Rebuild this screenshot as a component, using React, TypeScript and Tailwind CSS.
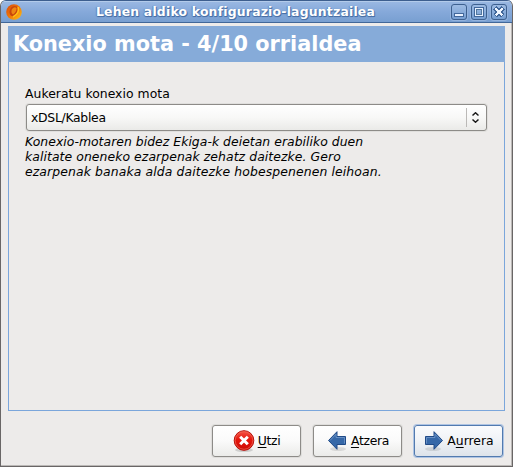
import type { ReactNode } from "react";

function WindowButton({ children }: { children: ReactNode }) {
  return (
    <div className="h-4 w-4 rounded-[3px] border border-[#3d608f] bg-linear-to-b from-[#9dbbe3] to-[#779fd2] shadow-[0_0_0_1px_#94b3dd]">
      <svg className="block h-[14px] w-[14px]" viewBox="0 0 14 14" shapeRendering="crispEdges">
        {children}
      </svg>
    </div>
  );
}

function TitleBar() {
  return (
    <header className="flex h-[22px] shrink-0 items-center border-b border-[#416799] bg-linear-to-b from-[#9bb9e3] via-[#86a9da] to-[#789fd1] shadow-[inset_0_1px_0_#b3cbea] pr-[5px] pl-[5px]">
      <svg className="h-4 w-4 shrink-0" viewBox="0 0 16 16">
        <defs>
          <linearGradient id="ball" x1="0" y1="0" x2="1" y2="1">
            <stop offset="0" stopColor="#d9480a" />
            <stop offset=".5" stopColor="#f07808" />
            <stop offset="1" stopColor="#ffc818" />
          </linearGradient>
        </defs>
        <circle cx="8" cy="8" r="7.8" fill="url(#ball)" />
        <path d="M5 3.500Q10 .5 12 4Q12 9 7.500 12.500Q3 12 3.500 7Z" fill="#c8460c" />
        <path d="M6 5Q9 2 10.500 4.500Q10.500 8 7 10.500Q4.500 9 6 5" fill="#ed8614" />
        <path d="M12 3Q14 9 7 13" fill="none" stroke="#ffbd17" strokeWidth="1.500" />
      </svg>
      <h1 className="flex-1 pr-[2px] text-center text-[12.4px] leading-[20px] font-bold tracking-[0.21px] whitespace-nowrap text-white [text-shadow:1px_1px_0_#4b70a5,0_1px_1px_#4b70a5,-1px_0_1px_#668cc0]">
        Lehen aldiko konfigurazio-laguntzailea
      </h1>
      <div className="flex gap-1">
        <WindowButton>
          <rect x="2.500" y="8.500" width="9" height="3" fill="#e8f1ff" stroke="#42689b" />
        </WindowButton>
        <WindowButton>
          <path fillRule="evenodd" d="M2 2H12V12H2ZM3 3V11H11V3Z" fill="#42689b" />
          <path fillRule="evenodd" d="M3 3H11V11H3ZM5 5V9H9V5Z" fill="#e8f1ff" />
          <path fillRule="evenodd" d="M4 4H10V10H4ZM5 5V9H9V5Z" fill="#52789f" />
        </WindowButton>
        <WindowButton>
          <path d="M3 3L11 11M11 3L3 11" stroke="#42689b" strokeWidth="4.500" />
          <path d="M3.500 3.500L10.500 10.500M10.500 3.500L3.500 10.500" stroke="#f0f6ff" strokeWidth="2.500" />
        </WindowButton>
      </div>
    </header>
  );
}

function CancelIcon() {
  return (
    <svg className="h-[22px] w-[22px] shrink-0" viewBox="0 0 22 22">
      <defs>
        <linearGradient id="red" x1="0" y1="0" x2="0" y2="1">
          <stop offset="0" stopColor="#f5584a" />
          <stop offset=".45" stopColor="#e5160c" />
          <stop offset="1" stopColor="#ce0c06" />
        </linearGradient>
      </defs>
      <ellipse cx="11" cy="20" rx="9" ry="2" fill="#000" opacity=".14" />
      <circle cx="11" cy="10.500" r="9.800" fill="url(#red)" stroke="#b50d08" strokeWidth="1" />
      <circle cx="11" cy="10.500" r="8.800" fill="none" stroke="#f26a58" strokeWidth=".7" />
      <path d="M7.200 6.700L14.800 14.300M14.800 6.700L7.200 14.300" stroke="#fff" strokeWidth="3" />
    </svg>
  );
}

function ArrowIcon({ back = false }: { back?: boolean }) {
  return (
    <svg className={back ? "h-[22px] w-[22px] shrink-0" : "h-[22px] w-[22px] shrink-0 -scale-x-100"} viewBox="0 0 22 22">
      <ellipse cx="12" cy="19" rx="8" ry="2" fill="#000" opacity=".1" />
      <path d="M2.500 10.500L11 1.700V6.500H19.500V14.500H11V19.300Z" fill="#3668a8" stroke="#204a87" />
      <path d="M4 10.500L10 4.200V7.500H18.500V13.500" fill="none" stroke="#7299cc" strokeWidth=".8" />
    </svg>
  );
}

function ActionButton({ icon, focused = false, children }: { icon: ReactNode; focused?: boolean; children: ReactNode }) {
  return (
    <button
      className={
        focused
          ? "flex h-8 w-[89px] items-center justify-center gap-[2px] rounded-[3px] border border-[#527aaf] bg-linear-to-b from-[#fafbfd] via-[#eff2f6] to-[#dde3ea] shadow-[0_0_0_1px_#aec4e3] whitespace-nowrap"
          : "flex h-8 w-[89px] items-center justify-center gap-[3px] rounded-[3px] border border-[#8d8b88] bg-linear-to-b from-white via-[#fafafa] to-[#ebebe9] shadow-[0_0_0_1px_#dedddb] tracking-[-0.3px] whitespace-nowrap"
      }
    >
      {icon}
      <span className="-mt-px">{children}</span>
    </button>
  );
}

export default function App() {
  return (
    <div className="h-[467px] w-[513px] overflow-hidden bg-white font-['DejaVu_Sans',sans-serif] text-[12.4px] leading-[15px] text-black">
      <div className="flex h-full flex-col overflow-hidden rounded-t-[6px] border border-t-[#3d5e8e] border-r-[#696666] border-b-[#696666] border-l-[#696666] bg-[#edebea] shadow-[inset_-1px_-1px_0_#bbb8b6]">
        <TitleBar />
        <main className="mx-[7px] mt-[3px] flex h-[385px] flex-col border border-[#7ba6db]">
          <h2 className="-mx-px -mt-px flex h-9 items-center bg-[#86abd9] pl-[5px] text-[20.8px] leading-9 font-bold whitespace-nowrap text-white">
            Konexio mota - 4/10 orrialdea
          </h2>
          <section className="px-4 pt-[24px]">
            <p className="tracking-[0.04px] whitespace-nowrap">Aukeratu konexio mota</p>
            <div className="mt-[3px] ml-[1px] flex h-[27px] w-[461px] items-center rounded-[3px] border border-[#8d8b88] bg-linear-to-b from-white from-0% via-[#f8f8f7] via-50% to-[#eaeae8] pl-1 shadow-[0_0_0_1px_#e0dfdd]">
              <span className="flex-1 tracking-[-0.28px]">xDSL/Kablea</span>
              <div className="flex h-[19px] w-5 items-center border-l border-[#bbb9b7] pl-[5px]">
                <svg className="h-[11px] w-[7px]" viewBox="0 0 7 11" fill="none" stroke="#181818" strokeWidth="1.500">
                  <path d="M.5 3.500L3.500 .8L6.500 3.500M.5 7.500L3.500 10.200L6.500 7.500" />
                </svg>
              </div>
            </div>
            <p className="mt-[3px] whitespace-nowrap italic">
              <span className="tracking-[0.04px]">Konexio-motaren bidez Ekiga-k deietan erabiliko duen</span>
              <br />
              <span className="tracking-[0.08px]">kalitate oneneko ezarpenak zehatz daitezke. Gero</span>
              <br />
              <span className="tracking-[0.12px]">ezarpenak banaka alda daitezke hobespenenen leihoan.</span>
            </p>
          </section>
        </main>
        <footer className="mt-[14px] flex justify-end gap-[12px] pr-[9px]">
          <ActionButton icon={<CancelIcon />}>
            <span className="underline underline-offset-2">U</span>tzi
          </ActionButton>
          <ActionButton icon={<ArrowIcon back />}>
            <span className="underline underline-offset-2">A</span>tzera
          </ActionButton>
          <ActionButton icon={<ArrowIcon />} focused>
            A<span className="underline underline-offset-2">u</span>rrera
          </ActionButton>
        </footer>
      </div>
    </div>
  );
}
